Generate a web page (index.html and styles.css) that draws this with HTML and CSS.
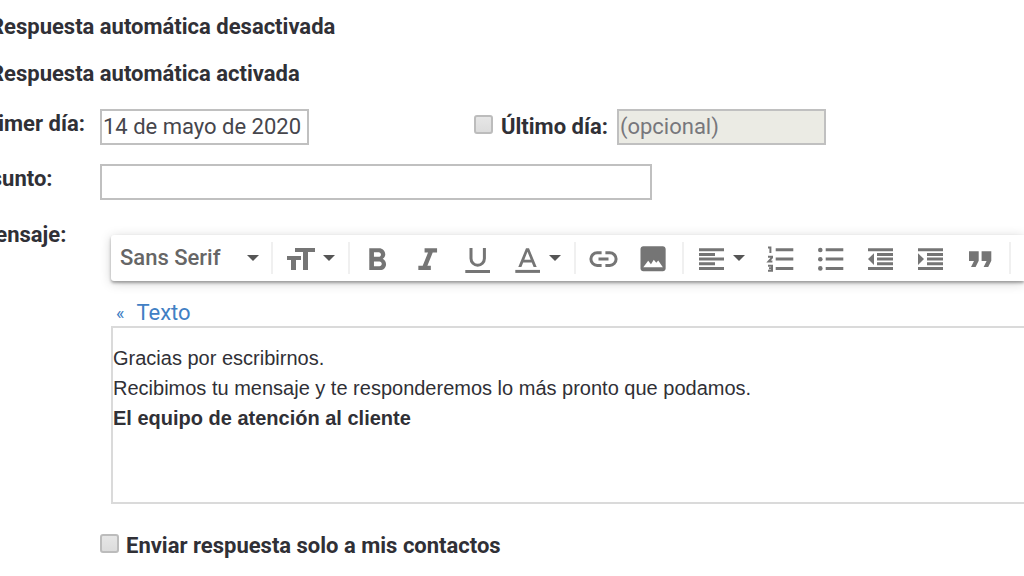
FILE: index.html
```
<!DOCTYPE html>
<html lang="es">
<head>
  <meta charset="UTF-8">
  <meta name="viewport" content="width=device-width, initial-scale=1.0">
  <title>Respuesta automática</title>
  <link rel="stylesheet" href="styles.css">
</head>
<body>

  <form class="settings">
    <!-- Estado -->
    <label class="option">
      <input type="radio" name="estado">
      <span>Respuesta automática desactivada</span>
    </label>
    <label class="option">
      <input type="radio" name="estado" checked>
      <span>Respuesta automática activada</span>
    </label>

    <!-- Fechas -->
    <div class="row">
      <label class="name" for="primer-dia">Primer día:</label>
      <div class="dates">
        <input class="box date" type="text" id="primer-dia" value="14 de mayo de 2020">
        <div class="last-day">
          <input class="check" type="checkbox" id="usar-ultimo">
          <label for="usar-ultimo">Último día:</label>
          <input class="box date off" type="text" aria-label="Último día" value="(opcional)" disabled>
        </div>
      </div>
    </div>

    <div class="row">
      <label class="name" for="asunto">Asunto:</label>
      <input class="box subject" type="text" id="asunto">
    </div>

    <!-- Mensaje -->
    <div class="row message-row">
      <label class="name" for="mensaje">Mensaje:</label>
      <div class="editor">
        <div class="toolbar">
          <button type="button" class="font">Sans Serif <i class="caret"></i></button>
          <span class="sep"></span>
          <button type="button" class="size" aria-label="Tamaño">
            <svg viewBox="0 0 32 32"><path d="M10 6h20v4h-7v18h-5V10h-8zM2 14h14v4h-5v10H6V18H2z"/></svg>
            <i class="caret"></i>
          </button>
          <span class="sep"></span>
          <button type="button" class="tool" aria-label="Negrita">
            <svg viewBox="1.7 0 20.5 20.5"><path d="M15.6 10.79c.97-.67 1.65-1.77 1.65-2.79 0-2.26-1.75-4-4-4H7v14h7.04c2.09 0 3.71-1.7 3.71-3.79 0-1.52-.86-2.82-2.15-3.42zM10 6.5h3c.83 0 1.5.67 1.5 1.5s-.67 1.5-1.5 1.5h-3v-3zm3.5 9H10v-3h3.5c.83 0 1.5.67 1.5 1.5s-.67 1.5-1.5 1.5z"/></svg>
          </button>
          <button type="button" class="tool" aria-label="Cursiva">
            <svg viewBox="1.3 0 20.5 20.5"><path d="M10 4v2.8h2.21l-3.42 8.4H6V18h8v-2.8h-2.21l3.42-8.4H18V4z"/></svg>
          </button>
          <button type="button" class="tool" aria-label="Subrayado">
            <svg viewBox="0 0 32 32"><path class="line" d="M10 6v10.5a6.7 6.7 0 0 0 13.4 0V6M4.3 29.4H29"/></svg>
          </button>
          <button type="button" class="color" aria-label="Color del texto">
            <svg viewBox="0 0 32 32"><path d="M15 6.3h3L25.7 25h-3.1l-1.8-4.6h-8.6L10.4 25H7.3zm1.5 3.4l-3.2 8h6.4z"/><path class="line" d="M4.3 29.4H29"/></svg>
            <i class="caret"></i>
          </button>
          <span class="sep"></span>
          <button type="button" class="tool" aria-label="Insertar enlace">
            <svg viewBox="0 0 32 32"><path class="line" d="M14.6 10.8h-4.4a6.3 6.3 0 0 0 0 12.6h4.4M18.4 10.8h4.4a6.3 6.3 0 0 1 0 12.6h-4.4M11.5 17.1h10"/></svg>
          </button>
          <button type="button" class="tool" aria-label="Insertar imagen">
            <svg viewBox="0.5 0 22.9 22.9"><path d="M21 19V5c0-1.1-.9-2-2-2H5c-1.1 0-2 .9-2 2v14c0 1.1.9 2 2 2h14c1.1 0 2-.9 2-2zM5 18l3.5-4.5 2 2.4 2-3.2 1.8 2.2 1.4-1.6L19 18z"/></svg>
          </button>
          <span class="sep"></span>
          <button type="button" class="align" aria-label="Alinear">
            <svg viewBox="0 0 32 32"><path class="line" d="M4 7.7h25M4 12.4h16M4 17h25M4 21.7h16M4 26.4h25"/></svg>
            <i class="caret"></i>
          </button>
          <button type="button" class="tool" aria-label="Lista numerada">
            <svg viewBox="0 0 32 32"><path class="line" d="M11.7 7.7h17.6M11.7 17h17.6M11.7 26.4h17.6"/><path class="thin" d="M4 5.4h2.4V11M4 14.7h4v1L4.6 19.4H8.4M4 23.7h4v5H4M5 26.2h3"/></svg>
          </button>
          <button type="button" class="tool" aria-label="Lista con viñetas">
            <svg viewBox="0 0 32 32"><path class="line" d="M11.7 7.7h17.6M11.7 17h17.6M11.7 26.4h17.6"/><circle cx="6.3" cy="8" r="2.3"/><circle cx="6.3" cy="17.3" r="2.3"/><circle cx="6.3" cy="26.4" r="2.3"/></svg>
          </button>
          <button type="button" class="tool" aria-label="Reducir sangría">
            <svg viewBox="0 0 32 32"><path class="line" d="M4 7.7h25M13 12.4h16M13 17h16M13 21.7h16M4 26.4h25"/><path d="M10 11.3v11.6L4 17z"/></svg>
          </button>
          <button type="button" class="tool" aria-label="Aumentar sangría">
            <svg viewBox="0 0 32 32"><path class="line" d="M4 7.7h25M13 12.4h16M13 17h16M13 21.7h16M4 26.4h25"/><path d="M4 11.3v11.6l6-5.9z"/></svg>
          </button>
          <button type="button" class="tool" aria-label="Cita">
            <svg viewBox="0 0 32 32"><path d="M5 9.3h9.7v9.4L11.6 25H7l3-6H5zM17.6 9.3h9.7v9.4L24.2 25h-4.6l3-6h-5z"/></svg>
          </button>
          <span class="sep"></span>
        </div>

        <a class="plain" href="#"><small>«</small>Texto</a>

        <div class="text" id="mensaje" contenteditable="true">
          <div>Gracias por escribirnos.</div>
          <div>Recibimos tu mensaje y te responderemos lo más pronto que podamos.</div>
          <div><b>El equipo de atención al cliente</b></div>
        </div>
      </div>
    </div>

    <div class="row contacts">
      <input class="check" type="checkbox" id="contactos">
      <label for="contactos">Enviar respuesta solo a mis contactos</label>
    </div>
  </form>

</body>
</html>
```
FILE: styles.css
```
body {
  margin: 0;
  overflow: hidden;
  background: #fff;
  color: #303036;
  font: 700 22px/28px Roboto, Arial, sans-serif;
}

/* the form starts a little outside the left edge */
.settings {
  margin-left: -24px;
  padding-top: 13px;
}

.option {
  display: flex;
  align-items: center;
  height: 28px;
  margin: 0 0 19px -12px;
}

.option input {
  width: 16px;
  height: 16px;
  margin: 0 10px 0 0;
}

.row {
  display: flex;
  align-items: flex-start;
  margin-top: 19px;
}

.option + .row {
  margin-top: 0;
  padding-top: 2px;
}

.name {
  flex: 0 0 124px;
  padding-top: 1px;
}

.dates,
.last-day {
  display: flex;
  align-items: center;
}

.last-day {
  margin-left: 165px;
}

.last-day label {
  margin: 0 9px 0 8px;
}

.box {
  box-sizing: border-box;
  height: 36px;
  padding: 0 1px 2px;
  border: 2px solid #c0c0c0;
  background: #fff;
  color: #46464c;
  font: 400 22px/28px Roboto, Arial, sans-serif;
}

.date {
  width: 209px;
}

.off {
  background: #ebebe4;
  color: #77777c;
}

.subject {
  width: 552px;
}

.check {
  appearance: none;
  flex: none;
  width: 19px;
  height: 19px;
  margin: 0 0 6px;
  border: 2px solid #bcbcbc;
  border-radius: 3px;
  background: linear-gradient(#e6e6e6, #dcdcdc);
}

/* Editor */
.message-row {
  margin-top: 20px;
}

.editor {
  flex: 1;
  min-width: 0;
  padding: 15px 0 0 11px;
}

.toolbar {
  display: flex;
  align-items: center;
  height: 46px;
  border-radius: 3px 0 0 3px;
  background: #fff;
  box-shadow: 0 2px 3px rgba(0, 0, 0, 0.32), 0 2px 12px rgba(0, 0, 0, 0.18);
}

.toolbar button {
  display: flex;
  flex: none;
  align-items: center;
  height: 46px;
  padding: 0;
  border: 0;
  background: none;
  color: #666;
  font: 500 22px/28px Roboto, Arial, sans-serif;
}

.toolbar svg {
  width: 32px;
  height: 32px;
  fill: #757575;
}

.toolbar .line,
.toolbar .thin {
  fill: none;
  stroke: #757575;
  stroke-width: 3;
}

.toolbar .thin {
  stroke-width: 2;
}

.caret {
  border: 6px solid transparent;
  border-top-color: #555;
  border-bottom: 0;
}

.toolbar .font {
  justify-content: space-between;
  width: 160px;
  padding: 0 12px 0 9px;
}

.toolbar .size {
  gap: 6px;
  width: 73px;
  padding-left: 10px;
}

.toolbar .tool {
  justify-content: center;
  width: 50px;
}

.toolbar .color {
  gap: 6px;
  width: 72px;
  padding-left: 9px;
}

.toolbar .align {
  gap: 6px;
  width: 69px;
  padding-left: 9px;
}

.sep {
  flex: none;
  width: 2px;
  height: 32px;
  margin-right: 2px;
  background: #f0f0f0;
}

.tool + .sep {
  margin-left: 4px;
}

.plain {
  display: flex;
  align-items: center;
  gap: 12px;
  height: 27px;
  margin-top: 18px;
  padding-left: 5px;
  color: #4180c4;
  font-weight: 400;
  text-decoration: none;
}

.plain small {
  font-size: 18px;
}

.text {
  box-sizing: border-box;
  min-height: 178px;
  padding: 15px 0 0;
  border: 2px solid #dadada;
  border-right: 0;
  font: 400 20px/30px "Liberation Sans", Arial, sans-serif;
}

.contacts {
  align-items: center;
  gap: 7px;
  margin-top: 28px;
  padding-left: 124px;
}
```
